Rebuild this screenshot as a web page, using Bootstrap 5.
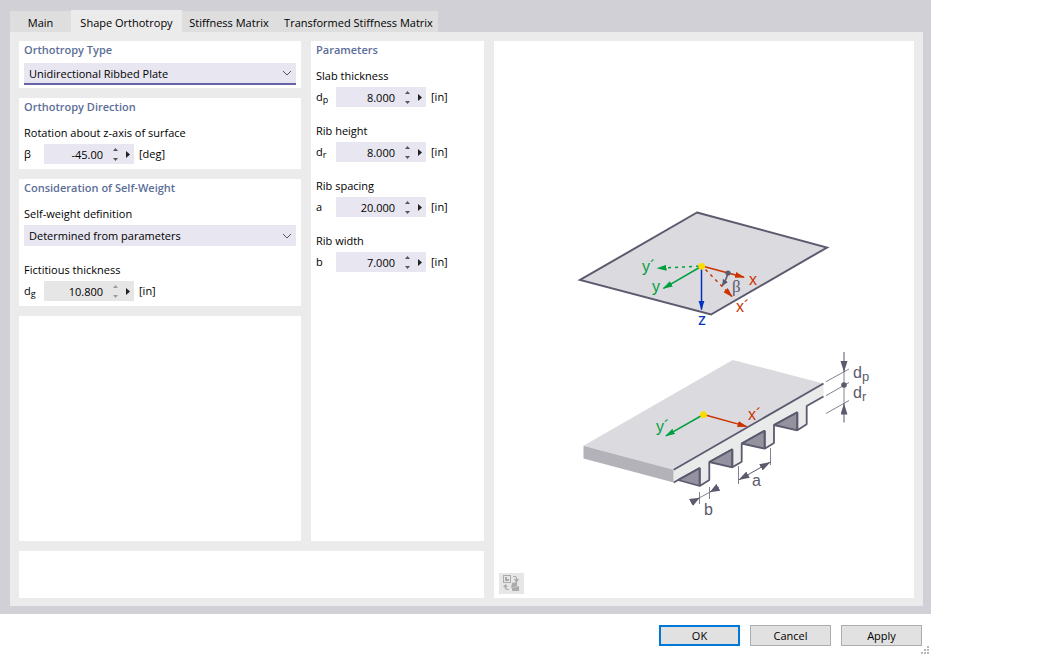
<!DOCTYPE html>
<html lang="en">
<head>
<meta charset="utf-8">
<meta name="viewport" content="width=device-width, initial-scale=1">
<title>Shape Orthotropy</title>
<link href="https://cdn.jsdelivr.net/npm/bootstrap@5.3.0/dist/css/bootstrap.min.css" rel="stylesheet">
<style>
  body { font: 11px/18px "Open Sans", "Noto Sans", sans-serif; color: #000; background: #fff; }
  .dialog { max-width: 931px; }
  .frame { background: #d1d0d6; padding: 10px 8px 8px 10px; }
  .nav-tabs { border: 0; }
  .nav-tabs .nav-link { border: 0; border-radius: 0; height: 21px; padding: 0; line-height: 23px; color: #000; background: #dedede; white-space: nowrap; text-align: center; margin: 0; }
  .nav-tabs .nav-link.active { height: 22px; line-height: 26px; background: #ebebeb; color: #000; }
  .tab-a { width: 61px; } .tab-b { width: 111px; } .tab-c { width: 94px; } .tab-d { width: 162px; }
  .nav-tabs .tab-d { padding-left: 3px; }
  .pane { background: #ebebeb; padding: 9px 9px 8px 9px; gap: 10px; }
  .gap-x { gap: 10px; }
  .sheet { background: #fff; padding: 0 5px 5px; }
  .sheet-sm { padding-bottom: 3px; }
  .col-forms { width: 282px; }
  .col-params { width: 173px; }
  .note { height: 47px; }
  .group-title { font-size: 11px; line-height: 18px; font-weight: 600; color: #5b6e98; margin: 0 0 8px; }
  .sheet-sm .group-title { margin-bottom: 4px; }
  .field-label { display: block; margin-bottom: 2px; }
  .field + .field { margin-top: 15px; }
  .form-select { font-size: 11px; line-height: 18px; height: 21px; padding: 0 22px 0 5px; border: 0; border-radius: 0; color: #000; background: #e8e7f1 url("data:image/svg+xml,%3Csvg xmlns='http://www.w3.org/2000/svg' viewBox='0 0 10 6'%3E%3Cpath d='M1 1 5 5 9 1' fill='none' stroke='%23555'/%3E%3C/svg%3E") no-repeat right 4px center / 10px 6px; }
  .form-select.current { height: 22px; padding-top: 2px; border-bottom: 2px solid #6562a5; }
  .sym { width: 20px; }
  .sym sub { font-size: 9px; bottom: -2px; line-height: 0; }
  .spin { width: 90px; height: 20px; background: #e8e7f1; margin-right: 5px; }
  .spin input { width: 60px; border: 0; padding: 2px 1px 0 0; text-align: right; background: none; color: #000; outline: 0; }
  .spin button { border: 0; padding: 0; background: none; display: flex; align-items: center; justify-content: center; }
  .spin .updown { width: 6px; margin-left: 8px; }
  .spin .updown button { height: 10px; width: 6px; }
  .spin .more { width: 20px; padding-left: 4px; }
  .spin.off { background: #e6e6e6; }
  .spin.off .updown { opacity: .5; }
  .drawing { width: 100%; flex: 1 1 0; min-height: 0; }
  .drawing text { font: 16px "Liberation Sans", sans-serif; }
  .drawing .small-sub { font-size: 13px; }
  .drawing .greek { font: 17px "Liberation Serif", serif; }
  .picture-bar { padding: 0 5px 4px; }
  .tool { width: 25px; height: 21px; border: 0; background: #e6e6e6; padding: 0; display: flex; align-items: center; justify-content: center; }
  .footer-bar { padding: 11px 9px 10px; gap: 10px; }
  .footer-bar .btn { width: 81px; height: 21px; padding: 0; font-size: 11px; line-height: 19px; border: 1px solid #adadad; border-radius: 0; background: #e1e1e1; color: #000; }
  .footer-bar .btn-default { border: 2px solid #0078d7; line-height: 17px; }
  .grip { right: 2px; bottom: 2px; }
</style>
</head>
<body>
<main class="dialog d-flex flex-column min-vh-100">
  <div class="frame d-flex flex-column flex-fill">
    <ul class="nav nav-tabs flex-nowrap align-items-end" role="tablist">
      <li class="nav-item"><button type="button" class="nav-link tab-a" role="tab">Main</button></li>
      <li class="nav-item"><button type="button" class="nav-link active tab-b" role="tab" aria-selected="true">Shape Orthotropy</button></li>
      <li class="nav-item"><button type="button" class="nav-link tab-c" role="tab">Stiffness Matrix</button></li>
      <li class="nav-item"><button type="button" class="nav-link tab-d" role="tab">Transformed Stiffness Matrix</button></li>
    </ul>
    <div class="pane d-flex flex-fill">
      <div class="d-flex flex-column flex-shrink-0 gap-x">
        <div class="d-flex flex-fill gap-x">
          <div class="col-forms d-flex flex-column gap-x">
            <section class="sheet sheet-sm">
              <h2 class="group-title"><label for="type">Orthotropy Type</label></h2>
              <select id="type" class="form-select current"><option>Unidirectional Ribbed Plate</option></select>
            </section>
            <section class="sheet">
              <h2 class="group-title">Orthotropy Direction</h2>
              <div class="field">
                <label class="field-label" for="beta">Rotation about z-axis of surface</label>
                <div class="d-flex align-items-center"><span class="sym">β</span>
                  <div class="spin d-flex"><input id="beta" type="text" value="-45.00"><div class="updown"><button type="button" aria-label="Increase"><svg width="5" height="3"><path d="M0 3 2.5 0 5 3z" fill="#555"/></svg></button><button type="button" aria-label="Decrease"><svg width="5" height="3"><path d="M0 0 2.5 3 5 0z" fill="#555"/></svg></button></div><button class="more" type="button" aria-label="More"><svg width="4" height="7"><path d="M0 0 4 3.5 0 7z" fill="#222"/></svg></button></div><span>[deg]</span></div>
              </div>
            </section>
            <section class="sheet">
              <h2 class="group-title">Consideration of Self-Weight</h2>
              <div class="field">
                <label class="field-label" for="selfweight">Self-weight definition</label>
                <select id="selfweight" class="form-select"><option>Determined from parameters</option></select>
              </div>
              <div class="field">
                <label class="field-label" for="dg">Fictitious thickness</label>
                <div class="d-flex align-items-center"><span class="sym">d<sub>g</sub></span>
                  <div class="spin off d-flex"><input id="dg" type="text" value="10.800" readonly><div class="updown"><button type="button" aria-label="Increase"><svg width="5" height="3"><path d="M0 3 2.5 0 5 3z" fill="#555"/></svg></button><button type="button" aria-label="Decrease"><svg width="5" height="3"><path d="M0 0 2.5 3 5 0z" fill="#555"/></svg></button></div><button class="more" type="button" aria-label="More"><svg width="4" height="7"><path d="M0 0 4 3.5 0 7z" fill="#222"/></svg></button></div><span>[in]</span></div>
              </div>
            </section>
            <section class="sheet flex-fill"></section>
          </div>
          <section class="sheet col-params">
            <h2 class="group-title">Parameters</h2>
            <div class="field">
              <label class="field-label" for="dp">Slab thickness</label>
              <div class="d-flex align-items-center"><span class="sym">d<sub>p</sub></span>
                <div class="spin d-flex"><input id="dp" type="text" value="8.000"><div class="updown"><button type="button" aria-label="Increase"><svg width="5" height="3"><path d="M0 3 2.5 0 5 3z" fill="#555"/></svg></button><button type="button" aria-label="Decrease"><svg width="5" height="3"><path d="M0 0 2.5 3 5 0z" fill="#555"/></svg></button></div><button class="more" type="button" aria-label="More"><svg width="4" height="7"><path d="M0 0 4 3.5 0 7z" fill="#222"/></svg></button></div><span>[in]</span></div>
            </div>
            <div class="field">
              <label class="field-label" for="dr">Rib height</label>
              <div class="d-flex align-items-center"><span class="sym">d<sub>r</sub></span>
                <div class="spin d-flex"><input id="dr" type="text" value="8.000"><div class="updown"><button type="button" aria-label="Increase"><svg width="5" height="3"><path d="M0 3 2.5 0 5 3z" fill="#555"/></svg></button><button type="button" aria-label="Decrease"><svg width="5" height="3"><path d="M0 0 2.5 3 5 0z" fill="#555"/></svg></button></div><button class="more" type="button" aria-label="More"><svg width="4" height="7"><path d="M0 0 4 3.5 0 7z" fill="#222"/></svg></button></div><span>[in]</span></div>
            </div>
            <div class="field">
              <label class="field-label" for="a">Rib spacing</label>
              <div class="d-flex align-items-center"><span class="sym">a</span>
                <div class="spin d-flex"><input id="a" type="text" value="20.000"><div class="updown"><button type="button" aria-label="Increase"><svg width="5" height="3"><path d="M0 3 2.5 0 5 3z" fill="#555"/></svg></button><button type="button" aria-label="Decrease"><svg width="5" height="3"><path d="M0 0 2.5 3 5 0z" fill="#555"/></svg></button></div><button class="more" type="button" aria-label="More"><svg width="4" height="7"><path d="M0 0 4 3.5 0 7z" fill="#222"/></svg></button></div><span>[in]</span></div>
            </div>
            <div class="field">
              <label class="field-label" for="b">Rib width</label>
              <div class="d-flex align-items-center"><span class="sym">b</span>
                <div class="spin d-flex"><input id="b" type="text" value="7.000"><div class="updown"><button type="button" aria-label="Increase"><svg width="5" height="3"><path d="M0 3 2.5 0 5 3z" fill="#555"/></svg></button><button type="button" aria-label="Decrease"><svg width="5" height="3"><path d="M0 0 2.5 3 5 0z" fill="#555"/></svg></button></div><button class="more" type="button" aria-label="More"><svg width="4" height="7"><path d="M0 0 4 3.5 0 7z" fill="#222"/></svg></button></div><span>[in]</span></div>
            </div>
          </section>
        </div>
        <section class="sheet note"></section>
      </div>
      <section class="bg-white flex-fill d-flex flex-column">
        <svg class="drawing" viewBox="494 41 420 532" role="img" aria-label="Ribbed plate with its axes and dimensions">
          <defs>
            <marker id="hr" markerUnits="userSpaceOnUse" markerWidth="11" markerHeight="8" refX="9" refY="3" orient="auto"><path d="M0 0 10 3 0 6z" fill="#cc3300"/></marker>
            <marker id="hg" markerUnits="userSpaceOnUse" markerWidth="11" markerHeight="8" refX="9" refY="3" orient="auto"><path d="M0 0 10 3 0 6z" fill="#00a040"/></marker>
            <marker id="hb" markerUnits="userSpaceOnUse" markerWidth="11" markerHeight="8" refX="9" refY="3" orient="auto"><path d="M0 0 10 3 0 6z" fill="#0032c0"/></marker>
            <marker id="hs" markerUnits="userSpaceOnUse" markerWidth="8" markerHeight="8" refX="6" refY="3" orient="auto"><path d="M0 0 7 3 0 6z" fill="#5c5a6e"/></marker>
            <marker id="hd" markerUnits="userSpaceOnUse" markerWidth="12" markerHeight="8" refX="11" refY="3.5" orient="auto-start-reverse"><path d="M0 0 11 3.5 0 7z" fill="#5c5a6e"/></marker>
            <marker id="hw" markerUnits="userSpaceOnUse" markerWidth="12" markerHeight="8" refX="10" refY="4" orient="auto"><path d="M0 0 10 4 0 8z" fill="#5c5a6e"/></marker>
          </defs>
          <path d="M697 212.5 827 247.5 711 314.5 580 280z" fill="#dbdadf" stroke="#5c5a6e" stroke-width="2"/>
          <g fill="none" stroke-width="1.5">
            <path d="M702 266 657.5 268.3" stroke="#00a040" stroke-dasharray="3 4" stroke-dashoffset="-3" marker-end="url(#hg)"/>
            <path d="M702 266 663.5 288.3" stroke="#00a040" marker-end="url(#hg)"/>
            <path d="M701.5 266V309.5" stroke="#0032c0" marker-end="url(#hb)"/>
            <path d="M702 266 732 296.5" stroke="#cc3300" stroke-dasharray="3 4" stroke-dashoffset="-5" marker-end="url(#hr)"/>
            <path d="M702 266 744 277.2" stroke="#cc3300" marker-end="url(#hr)"/>
            <path d="M728 273Q727 278 722.5 285.5" stroke="#5c5a6e" marker-end="url(#hs)"/>
          </g>
          <circle cx="728" cy="273" r="2.6" fill="#5c5a6e"/><circle cx="701.7" cy="266.3" r="3.4" fill="#ffdc00"/>
          <text x="642" y="272" fill="#00a040">y´</text><text x="652" y="292" fill="#00a040">y</text>
          <text x="749" y="285" fill="#cc3300">x</text><text x="736" y="312" fill="#cc3300">x´</text>
          <text x="698" y="325" fill="#0032c0">z</text><text class="greek" x="732" y="292" fill="#5c5a6e">β</text>

          <path d="M583.5 445.7 732.7 360 823.5 383.5 673.7 469.7z" fill="#dbdadf"/>
          <path d="M583.5 445.7 673.7 469.7V482.5L583.5 458.5z" fill="#b3b2b9"/>
          <path d="M673.7 469.7 823.5 383.5V396.5L806.7 406V424.3L797.3 430.3V412.3L774 425V443L764.7 448.7V430.7L741.7 443.5V461.7L732.3 467.3V449.3L709.3 462V480L699.7 486V468L673.7 482.5z" fill="#e9ebea"/>
          <g fill="#94929e" stroke="#5c5a6e" stroke-width="1.8" stroke-linejoin="bevel">
            <path d="M678 480 699.7 468V486z"/><path d="M709.3 462 732.3 449.3V467.3z"/><path d="M741.7 443.5 764.7 430.7V448.7z"/><path d="M774 425 797.3 412.3V430.3z"/>
            <path fill="none" d="M673.7 469.7 823.5 383.5M823.5 396.5 806.7 406V424.3L797.3 430.3V412.3L774 425V443L764.7 448.7V430.7L741.7 443.5V461.7L732.3 467.3V449.3L709.3 462V480L699.7 486V468L673.7 482.5"/>
          </g>
          <g fill="none" stroke-width="1.5">
            <path d="M703.5 414.5 666 435.8" stroke="#00a040" marker-end="url(#hg)"/>
            <path d="M703.5 414.5 746.5 426.4" stroke="#cc3300" marker-end="url(#hr)"/>
          </g>
          <circle cx="703.5" cy="414.7" r="3.4" fill="#ffdc00"/>
          <text x="656" y="432" fill="#00a040">y´</text><text x="748" y="420" fill="#cc3300">x´</text>
          <g fill="none" stroke="#5c5a6e" stroke-width="1">
            <path d="M826 381.7 849 369M826 395.7 849 382.5M826 413.5 849 400.5M844 371V404M738.5 466V484M770.5 448V465M699.5 492V504M709.5 487V499M699.7 497.7 709.7 492.3" stroke="#84828f"/>
            <path d="M844 352V372" marker-end="url(#hd)"/><path d="M844 422.5V403.5" marker-end="url(#hd)"/>
            <path d="M738.5 480 770.5 462" marker-start="url(#hd)" marker-end="url(#hd)"/>
            <path d="M691 502.5 699.7 497.7" marker-end="url(#hw)"/><path d="M719 487 709.7 492.3" marker-end="url(#hw)"/>
          </g>
          <circle cx="844" cy="385" r="2.8" fill="#5c5a6e"/>
          <g fill="#5c5a6e"><text x="853" y="378">d</text><text class="small-sub" x="862" y="381">p</text><text x="853" y="398">d</text><text class="small-sub" x="862" y="401">r</text><text x="752" y="486">a</text><text x="704" y="515">b</text></g>
        </svg>
        <div class="picture-bar">
          <button class="tool" type="button" aria-label="Switch picture">
            <svg width="17" height="17" viewBox="0 0 17 17" fill="#ababab"><path d="M0 0h8v8H0zM1 1v6h6V1z" fill-rule="evenodd"/><path d="M2 6V2h2v2h2v2z"/><path d="M10 1h2q2 0 2 3h2l-2.500 4L11 4h2q0-2-1-2h-2z"/><path d="M0 12l2.500-3L5 12H3q0 2 2 2h1v1H5q-3.500 0-3.500-3z"/><path d="M9 8l5-1v4l-6 2zM9 13l7-2v5H9z"/></svg>
          </button>
        </div>
      </section>
    </div>
  </div>
  <footer class="footer-bar d-flex justify-content-end position-relative">
    <button type="button" class="btn btn-default">OK</button>
    <button type="button" class="btn">Cancel</button>
    <button type="button" class="btn">Apply</button>
    <svg class="grip position-absolute" width="8" height="8" fill="#b8b8b8" aria-hidden="true"><path d="M6 0h2v2H6zM3 3h2v2H3zM6 3h2v2H6zM0 6h2v2H0zM3 6h2v2H3zM6 6h2v2H6z"/></svg>
  </footer>
</main>
<script src="https://cdn.jsdelivr.net/npm/bootstrap@5.3.0/dist/js/bootstrap.bundle.min.js"></script>
</body>
</html>
